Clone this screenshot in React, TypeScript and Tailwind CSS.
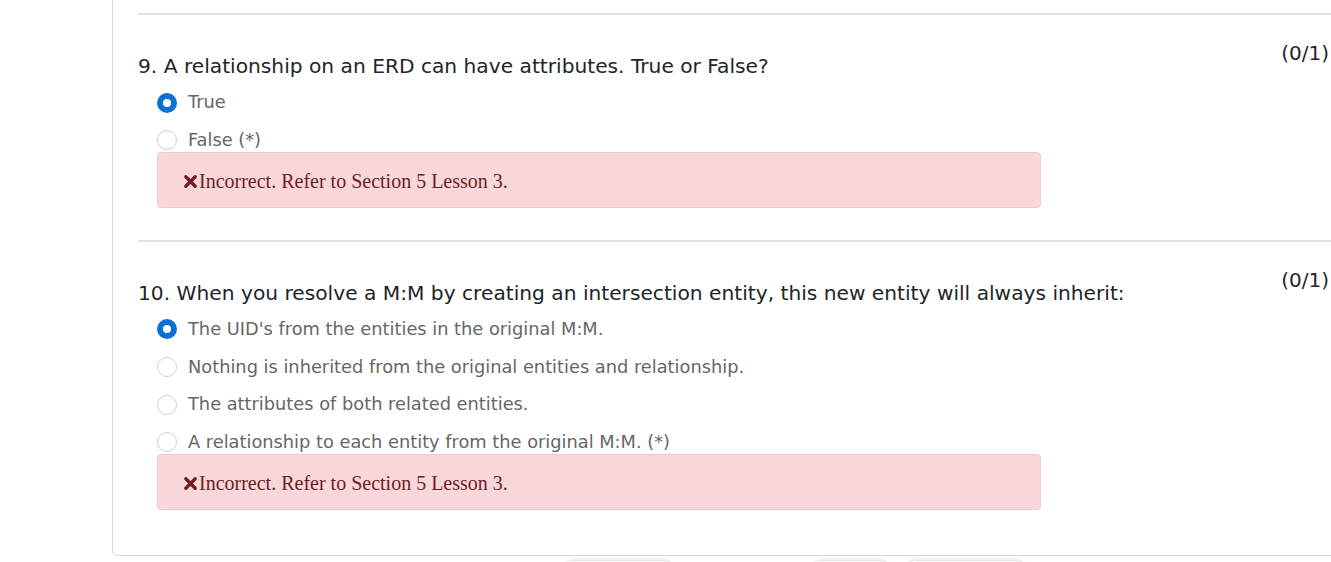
type Question = {
  num: number;
  text: string;
  options: string[];
  picked: number;
};

const questions: Question[] = [
  {
    num: 9,
    text: "A relationship on an ERD can have attributes. True or False?",
    options: ["True", "False (*)"],
    picked: 0,
  },
  {
    num: 10,
    text: "When you resolve a M:M by creating an intersection entity, this new entity will always inherit:",
    options: [
      "The UID's from the entities in the original M:M.",
      "Nothing is inherited from the original entities and relationship.",
      "The attributes of both related entities.",
      "A relationship to each entity from the original M:M. (*)",
    ],
    picked: 0,
  },
];

function Radio({ checked }: { checked: boolean }) {
  if (checked) {
    return (
      <span className="w-[20px] h-[20px] rounded-full bg-[#0c6fd3] flex items-center justify-center shrink-0">
        <span className="w-[8px] h-[8px] rounded-full bg-white" />
      </span>
    );
  }
  return (
    <span className="w-[20px] h-[20px] rounded-full border border-[#cfcfcf] bg-white shrink-0" />
  );
}

function TimesIcon() {
  return (
    <svg width="15" height="15" viewBox="0 0 16 16" className="mr-[1px] mt-[1px]">
      <path
        d="M3 3 L13 13 M13 3 L3 13"
        stroke="#721c24"
        strokeWidth="3.6"
        strokeLinecap="round"
      />
    </svg>
  );
}

function QuestionBlock({ q }: { q: Question }) {
  return (
    <div>
      <div className="h-[2px] bg-[#dee2e6]" />
      <div className="flex justify-between items-start pr-[33px]">
        <div className="pt-[38px]">
          <p className="text-[20.2px] text-[#212529] leading-[26px]">
            {q.num}. {q.text}
          </p>
          <div className="pl-[19px] mt-[12.5px] flex flex-col gap-[15.7px]">
            {q.options.map((opt, i) => (
              <label key={i} className="flex items-center gap-[11px] h-[22px]">
                <Radio checked={i === q.picked} />
                <span className="text-[17.8px] text-[#666]">{opt}</span>
              </label>
            ))}
          </div>
        </div>
        <span className="pt-[23px] text-[20px] text-[#212529] whitespace-nowrap">(0/1)</span>
      </div>
      <div className="ml-[19px] mt-[0.5px] w-[884px] h-[56px] bg-[#f8d7da] border border-[#f5c6cb] rounded-[4px] flex items-center pl-[25px] pt-[2px]">
        <span
          className="flex items-center text-[#721c24] text-[20px]"
          style={{ fontFamily: '"Liberation Serif", serif' }}
        >
          <TimesIcon />
          Incorrect. Refer to Section 5 Lesson 3.
        </span>
      </div>
    </div>
  );
}

export default function App() {
  return (
    <div
      className="h-[562px] overflow-hidden bg-white"
      style={{ fontFamily: '"DejaVu Sans", Verdana, sans-serif' }}
    >
      <div className="ml-[112px] w-[1250px] border-l border-b border-[#dcdcdc] rounded-bl-[5px] pl-[25px] pt-[13px] pb-[45px] flex flex-col gap-[32px]">
        {questions.map((q) => (
          <QuestionBlock key={q.num} q={q} />
        ))}
      </div>
      <div className="flex mt-[5px]">
        <div className="ml-[568px] w-[102px] h-[20px] rounded bg-white shadow-[0_0_4px_rgba(0,0,0,0.25)]" />
        <div className="ml-[146px] w-[70px] h-[20px] rounded bg-white shadow-[0_0_4px_rgba(0,0,0,0.25)]" />
        <div className="ml-[24px] w-[112px] h-[20px] rounded bg-white shadow-[0_0_4px_rgba(0,0,0,0.25)]" />
      </div>
    </div>
  );
}
